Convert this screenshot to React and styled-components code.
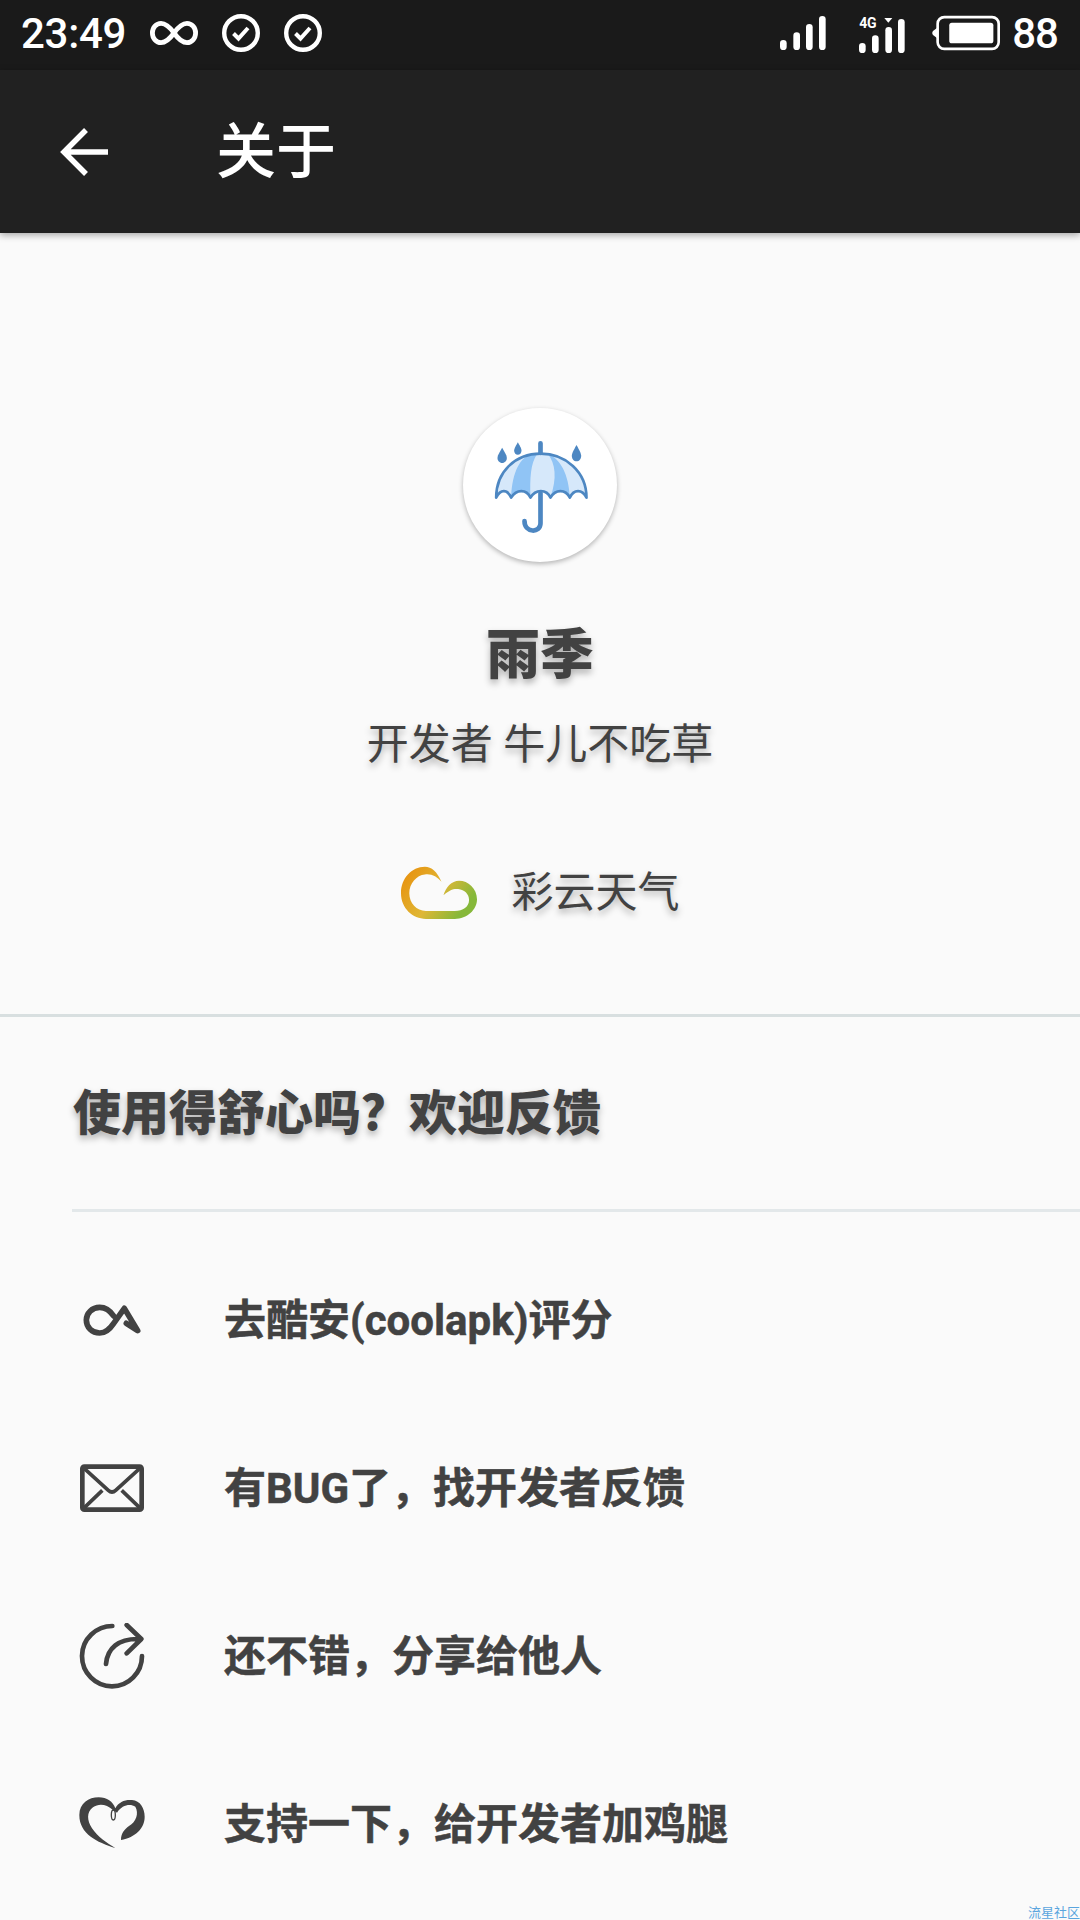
import styled, { createGlobalStyle } from "styled-components"

const GlobalStyle = createGlobalStyle`
    html, body {
        margin: 0;
        padding: 0;
        background: #fafafa;
    }
`
const Page = styled.div`
    position: relative;
    width: 1080px;
    height: 1920px;
    overflow: hidden;
    background: #fafafa;
    color: #424242;
    font-family: Roboto, "Noto Sans CJK SC", sans-serif;
`
const StatusBar = styled.div`
    display: flex;
    align-items: center;
    justify-content: space-between;
    height: 70px;
    padding: 0 22px 4px 21px;
    box-sizing: border-box;
    background: #1a1a1a;
    color: #fff;
    font-size: 42px;
    font-weight: 500;
`
const StatusGroup = styled.div`
    display: flex;
    align-items: center;
    gap: ${p => p.$gap}px;
`
const Clock = styled.span`
    letter-spacing: -0.3px;
`
const Battery = styled.span`
    font-size: 42px;
    letter-spacing: -1px;
`
const NetworkBars = styled.div`
    position: relative;
    width: 46px;
    height: 36px;
`
const NetworkLabel = styled.span`
    position: absolute;
    left: 0;
    top: 1px;
    font-size: 14px;
    line-height: 14px;
    font-weight: 700;
    letter-spacing: -0.3px;
`
const Toolbar = styled.header`
    position: relative;
    display: flex;
    align-items: center;
    height: 163px;
    padding-left: 60px;
    background: #212121;
    box-shadow: 0 2px 7px rgba(0, 0, 0, 0.35);
    color: #fff;
`
const ToolbarTitle = styled.h1`
    margin: 0 0 10px 108px;
    font-family: "Noto Sans CJK SC", sans-serif;
    font-size: 60px;
    font-weight: 500;
`
const About = styled.section`
    display: flex;
    flex-direction: column;
    align-items: center;
    padding: 175px 0 94px;
    border-bottom: 3px solid #d8dfe0;
`
const Avatar = styled.div`
    display: flex;
    align-items: center;
    justify-content: center;
    width: 154px;
    height: 154px;
    border-radius: 50%;
    background: #fff;
    box-shadow: 0 2px 5px rgba(0, 0, 0, 0.28);
`
const AppName = styled.h2`
    margin: 54px 0 0;
    font-size: 54px;
    line-height: 80px;
    font-weight: 900;
    text-shadow: 0 4px 7px rgba(0, 0, 0, 0.3);
`
const Developer = styled.p`
    margin: 19px 0 0;
    font-size: 42px;
    line-height: 60px;
    text-shadow: 0 4px 7px rgba(0, 0, 0, 0.3);
`
const Partner = styled.div`
    display: flex;
    align-items: center;
    gap: 33px;
    height: 56px;
    margin-top: 89px;
    font-size: 42px;
    text-shadow: 0 4px 7px rgba(0, 0, 0, 0.3);
`
const PartnerName = styled.span`
    margin: 0 0 7px;
`
const FeedbackTitle = styled.h3`
    display: flex;
    align-items: center;
    height: 192px;
    box-sizing: border-box;
    margin: 0;
    padding: 0 0 8px 73px;
    font-size: 48px;
    font-weight: 900;
    text-shadow: 0 4px 7px rgba(0, 0, 0, 0.3);
`
const Rule = styled.div`
    height: 3px;
    margin: 0 0 24px 72px;
    background: #e3e8ea;
`
const Row = styled.div`
    display: flex;
    align-items: center;
    gap: 79px;
    height: 168px;
    padding-left: 79px;
    font-size: 42px;
    font-weight: 700;
`
const RowLabel = styled.span`
    margin-bottom: 7px;
    -webkit-text-stroke: 0.5px #424242;
`
const Watermark = styled.span`
    position: absolute;
    right: 0;
    bottom: 0;
    font-size: 13px;
    line-height: 15px;
    color: #5aa5de;
`

const Infinity = () => (
    <svg width="48" height="26" viewBox="0 0 50 26" fill="none" stroke="#fff" strokeWidth="5">
        <path d="M25 13C20 6 16 3 11.500 3C6.500 3 2.500 7.500 2.500 13C2.500 18.500 6.500 23 11.500 23C16 23 20 20 25 13C30 6 34 3 38.500 3C43.500 3 47.500 7.500 47.500 13C47.500 18.500 43.500 23 38.500 23C34 23 30 20 25 13Z" />
    </svg>
)
const CheckCircle = () => (
    <svg width="38" height="38" viewBox="0 0 38 38" fill="none" stroke="#fff">
        <circle cx="19" cy="19" r="16.800" strokeWidth="4.400" />
        <path d="M11.500 19.500L16.500 24.500L26 14" strokeWidth="4" />
    </svg>
)
const Signal = () => (
    <svg width="46" height="36" viewBox="120 45 138 108" fill="#fff">
        <rect x="120" y="120" width="20" height="30" rx="10" />
        <rect x="160" y="97" width="20" height="53" rx="10" />
        <rect x="198" y="72" width="20" height="78" rx="10" />
        <rect x="237" y="48" width="20" height="102" rx="10" />
    </svg>
)
const Network = () => (
    <NetworkBars>
        <svg width="46" height="36" viewBox="360 45 138 108" fill="#fff">
            <rect x="360" y="120" width="20" height="30" rx="10" />
            <rect x="399" y="97" width="20" height="53" rx="10" />
            <rect x="439" y="72" width="20" height="78" rx="10" />
            <rect x="477" y="48" width="20" height="102" rx="10" />
            <path d="M436 45H460L448 59Z" />
        </svg>
        <NetworkLabel>4G</NetworkLabel>
    </NetworkBars>
)
const BatteryIcon = () => (
    <svg width="68" height="36" viewBox="575 45 205 108" fill="none">
        <rect x="592" y="51" width="184" height="96" rx="20" stroke="#fff" strokeWidth="8" />
        <rect x="627" y="68" width="133" height="62" rx="8" fill="#fff" />
        <path d="M590 84L578 93C575 97 575 101 578 105L590 114Z" fill="#fff" />
    </svg>
)
const BackArrow = () => (
    <svg width="48" height="48" viewBox="0 0 48 48" fill="none" stroke="#fff" strokeWidth="5.500">
        <path d="M48 24H4M26 2L4 24L26 46" />
    </svg>
)
const domePath = "M167 318C167 240 225 186 300 186C375 186 438 240 438 318C425 292 400 292 388 318C375 292 345 292 330 318C318 292 285 292 270 318C258 292 228 292 212 318C200 292 180 292 167 318Z"
const Umbrella = () => (
    <svg width="107" height="100" viewBox="140 130 320 300" fill="none">
        <path d={domePath} fill="#d6e8fa" />
        <path d="M275 188C240 195 215 240 212 316C228 294 258 294 270 316C268 260 270 215 290 187ZM322 187C345 215 350 260 330 316C345 294 375 294 388 316C385 250 360 200 322 187Z" fill="#90c4f5" />
        <path d={domePath} stroke="#4d87c2" strokeWidth="8" strokeLinejoin="round" />
        <path d="M300 155V184M300 305V395C300 425 252 425 252 388" stroke="#4d87c2" strokeWidth="14" strokeLinecap="round" />
        <path d="M185 168C175 185 171 192 171 199C171 207 177 214 185 214C193 214 199 207 199 199C199 192 195 185 185 168Z" fill="#4d87c2" />
        <path d="M232 152C224 166 221 172 221 177C221 184 226 189 232 189C238 189 243 184 243 177C243 172 240 166 232 152Z" fill="#4d87c2" />
        <path d="M408 160C398 178 394 186 394 193C394 202 400 209 408 209C416 209 422 202 422 193C422 186 418 178 408 160Z" fill="#4d87c2" />
    </svg>
)
const CloudLogo = () => (
    <svg width="78" height="55" viewBox="150 765 235 165">
        <defs>
            <linearGradient id="cloudFill" x1="0" y1="0.2" x2="1" y2="0.7">
                <stop offset="0" stopColor="#e8920f" />
                <stop offset="0.5" stopColor="#dfb735" />
                <stop offset="0.9" stopColor="#86b83a" />
            </linearGradient>
        </defs>
        <path
            fill="url(#cloudFill)"
            d="M275 815C262 785 245 770 225 770C185 770 153 805 153 850C153 895 188 927 228 927L315 927C352 927 382 900 382 868C382 835 355 812 328 812C305 812 288 832 281 856C298 840 312 835 325 837C345 840 358 852 358 870C358 890 340 903 315 903L228 903C200 903 178 880 178 850C178 820 200 795 225 793C245 790 262 800 275 815Z"
        />
    </svg>
)
const CoolapkIcon = () => (
    <svg width="66" height="66" viewBox="86 81 198 198" fill="none" stroke="#424242" strokeWidth="17" strokeLinecap="round" strokeLinejoin="round">
        <path d="M190 168C178 150 165 142 148 142C125 142 108 160 108 180C108 202 125 219 148 219C165 219 178 208 190 190L222 145L262 212L228 190" />
    </svg>
)
const MailIcon = () => (
    <svg width="66" height="66" viewBox="87 44 198 198" fill="none" stroke="#424242" strokeWidth="14" strokeLinejoin="round">
        <rect x="97" y="79" width="178" height="129" rx="6" />
        <path d="M100 82L175 150Q186 160 197 150L272 82M100 205L157 150M272 205L215 150" strokeWidth="11" />
    </svg>
)
const ShareIcon = () => (
    <svg width="66" height="66" viewBox="87 549 198 198" fill="none" stroke="#424242" strokeWidth="14" strokeLinecap="round" strokeLinejoin="round">
        <path d="M187 558C140 558 96 596 96 648C96 698 136 739 186 739C236 739 276 698 276 648" />
        <path d="M168 672C172 625 205 595 268 597M230 555L274 597L230 640" />
    </svg>
)
const HeartIcon = () => (
    <svg width="66" height="66" viewBox="86 1053 198 198" fill="#424242">
        <path d="M195 1224C140 1207 87 1182 87 1125C87 1090 115 1072 145 1072C170 1072 188 1085 195 1105C205 1085 225 1078 245 1080C270 1082 283 1105 283 1130C283 1165 255 1192 212 1200C212 1180 222 1168 236 1158C258 1145 266 1120 255 1100C240 1090 215 1094 200 1118L188 1110C168 1092 145 1090 128 1102C108 1116 110 1142 125 1165C142 1190 170 1210 195 1224Z" />
        <ellipse cx="189" cy="1125" rx="6" ry="15" fill="none" stroke="#424242" strokeWidth="4" />
    </svg>
)

const rows = [
    { id: "coolapk", icon: <CoolapkIcon />, label: "去酷安(coolapk)评分" },
    { id: "bug", icon: <MailIcon />, label: "有BUG了，找开发者反馈" },
    { id: "share", icon: <ShareIcon />, label: "还不错，分享给他人" },
    { id: "support", icon: <HeartIcon />, label: "支持一下，给开发者加鸡腿" },
]

const App = () => {
    return (
        <Page>
            <GlobalStyle />
            <StatusBar>
                <StatusGroup $gap={24}>
                    <Clock>23:49</Clock>
                    <Infinity />
                    <CheckCircle />
                    <CheckCircle />
                </StatusGroup>
                <StatusGroup $gap={27}>
                    <StatusGroup $gap={33}>
                        <Signal />
                        <Network />
                    </StatusGroup>
                    <StatusGroup $gap={12}>
                        <BatteryIcon />
                        <Battery>88</Battery>
                    </StatusGroup>
                </StatusGroup>
            </StatusBar>
            <Toolbar>
                <BackArrow />
                <ToolbarTitle>关于</ToolbarTitle>
            </Toolbar>
            <About>
                <Avatar>
                    <Umbrella />
                </Avatar>
                <AppName>雨季</AppName>
                <Developer>开发者 牛儿不吃草</Developer>
                <Partner>
                    <CloudLogo />
                    <PartnerName>彩云天气</PartnerName>
                </Partner>
            </About>
            <FeedbackTitle>使用得舒心吗？欢迎反馈</FeedbackTitle>
            <Rule />
            {rows.map(row => (
                <Row key={row.id}>
                    {row.icon}
                    <RowLabel>{row.label}</RowLabel>
                </Row>
            ))}
            <Watermark>流星社区</Watermark>
        </Page>
    )
}

export default App
